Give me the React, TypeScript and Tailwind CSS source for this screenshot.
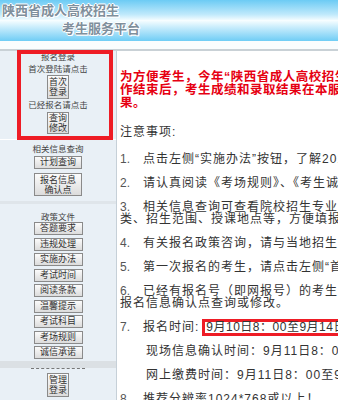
import type { ReactNode } from 'react';

function Btn({ children, className = '' }: { children: ReactNode; className?: string }) {
  return (
    <div
      className={`whitespace-nowrap border border-[#8a8a8a] bg-[linear-gradient(#fbfbfb,#dcdcdc)] text-center text-[9px] leading-[10px] text-[#333] ${className}`}
    >
      {children}
    </div>
  );
}

function Label({ children }: { children: ReactNode }) {
  return <div className="h-[11px] whitespace-nowrap text-[8.5px] leading-[11px] text-[#444]">{children}</div>;
}

const policy = ['答题要求', '违规处理', '实施办法', '考试时间', '阅读条款', '温馨提示', '考试科目', '考场规则', '诚信承诺'];

function Num({ n }: { n: string }) {
  return <span className="inline-block w-[23px] tracking-normal text-[#555]">{n}</span>;
}

export default function App() {
  return (
    <div className="h-[400px] w-[338px] overflow-hidden bg-white font-['Liberation_Sans','Noto_Sans_CJK_SC',sans-serif]">
      <header className="h-[41px] bg-[linear-gradient(#6ccbf4,#bfe9fb_35%,#f6fdff_50%,#bfe9fb_70%,#6fcdf5)] pl-[2px] pt-[4px] text-[13px] font-bold leading-[14px] text-[#7f8f9c] [text-shadow:-1px_0_#fff,1px_0_#fff,0_1px_#fff,0_-1px_#fff,1px_1px_#fff]">
        <div>陕西省成人高校招生</div>
        <div className="mt-[4px] pl-[60px]">考生服务平台</div>
      </header>
      <div className="h-[8px] bg-[#fafdfe]" />
      <div className="h-[2px] bg-[#c9d1d6]" />

      <div className="flex">
        <aside className="flex w-[117px] shrink-0 flex-col border-r border-[#c6d0d8] bg-[#e9f0f6]">
          <section className="relative flex h-[89px] flex-col items-center border-b border-white">
            <div className="mt-[1px]" />
            <Label>报名登录</Label>
            <div className="mt-[1px]" />
            <Label>首次登陆请点击</Label>
            <Btn className="w-[22px] py-[1px]">首次<br />登录</Btn>
            <div className="mt-[1px]" />
            <Label>已经报名请点击</Label>
            <Btn className="mt-[1px] w-[22px] py-0">查询<br />修改</Btn>
            <div className="absolute left-[17px] top-[-1px] h-[90px] w-[96px] border-4 border-[#ee1c25]" />
          </section>

          <section className="flex h-[64px] flex-col items-center border-b-[3px] border-[#dfe5ea]">
            <div className="mt-[4px]" />
            <Label>相关信息查询</Label>
            <Btn className="mt-[1px] h-[13px] w-[48px] leading-[11px]">计划查询</Btn>
            <Btn className="mt-[4px] w-[48px] py-[0.5px]">报名信息<br />确认点</Btn>
          </section>

          <section className="flex flex-col items-center">
            <div className="mt-[8px]" />
            <Label>政策文件</Label>
            <div className="mt-[-1px] flex flex-col gap-[2.5px]">
              {policy.map((p) => (
                <Btn key={p} className="h-[13px] w-[49px] leading-[11px]">
                  {p}
                </Btn>
              ))}
            </div>
          </section>
          <div className="mt-[2px] h-[7px] self-stretch bg-[#dbe0e4]" />
          <div className="mx-auto w-[54px] border-t border-dashed border-[#777]" />
          <Btn className="mx-auto mt-[4px] w-[22px] py-[1px]">管理<br />登录</Btn>
        </aside>

        <main className="min-w-0 flex-1 overflow-hidden whitespace-nowrap pl-[3px] text-[12px] tracking-[1px] text-[#333]">
          <div className="mt-[20px] text-[12.5px] font-bold leading-[13px] tracking-[0.5px] text-[#e60012]">
            <div>为方便考生，今年“陕西省成人高校招生考试报名工</div>
            <div>作结束后，考生成绩和录取结果在本服务平台查询结</div>
            <div>果。</div>
          </div>
          <div className="mt-[16px] leading-[12px]">注意事项:</div>
          <div className="mt-[15px] flex flex-col gap-[12px] leading-[12px]">
            <div><Num n="1." />点击左侧“实施办法”按钮，了解2018年报名</div>
            <div><Num n="2." />请认真阅读《考场规则》、《考生诚信承诺书》</div>
            <div>
              <div><Num n="3." />相关信息查询可查看院校招生专业目录、层次科</div>
              <div>类、招生范围、授课地点等，方便填报志愿。</div>
            </div>
            <div><Num n="4." />有关报名政策咨询，请与当地招生办联系。</div>
            <div><Num n="5." />第一次报名的考生，请点击左侧“首次登录”</div>
            <div>
              <div><Num n="6." />已经有报名号（即网报号）的考生，请点击左侧</div>
              <div>报名信息确认点查询或修改。</div>
            </div>
            <div>
              <Num n="7." />报名时间:
              <span className="relative -my-[3px] ml-[3px] inline-block border-[3px] border-[#ee1c25] px-[1px] leading-[11px] tracking-[0.5px]">
                9月10日8：00至9月14日
              </span>
            </div>
            <div className="pl-[26px]">现场信息确认时间：9月11日8：00至9月15日</div>
            <div className="pl-[26px]">网上缴费时间：9月11日8：00至9月16日</div>
            <div><Num n="8." />推荐分辨率1024*768或以上！</div>
          </div>
        </main>
      </div>
    </div>
  );
}
